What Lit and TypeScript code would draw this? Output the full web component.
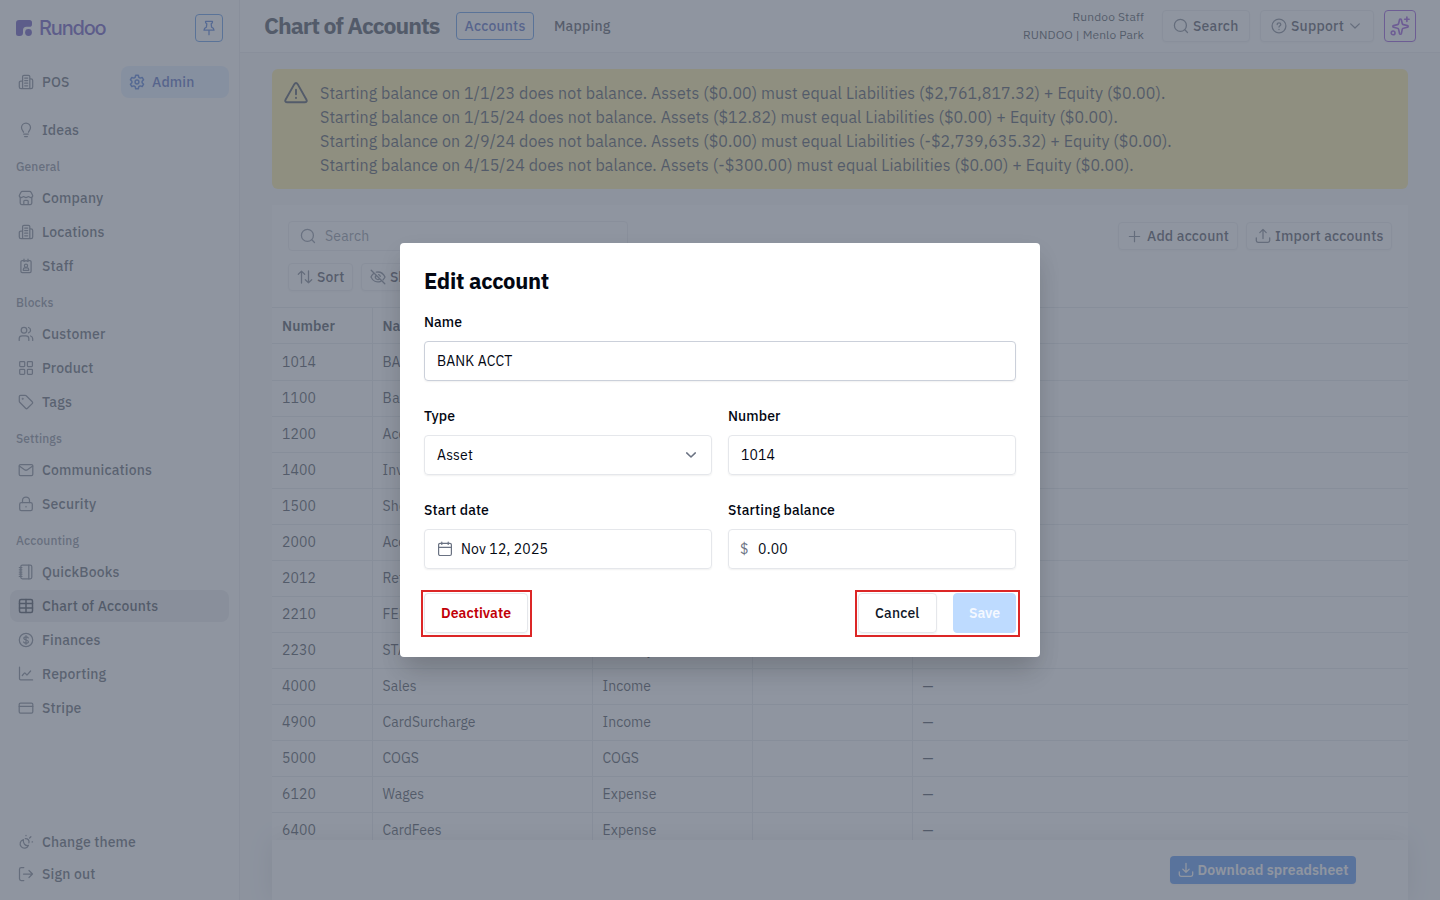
import { LitElement, html, css, svg, nothing } from "lit";
import { customElement, property } from "lit/decorators.js";

const ICONS: Record<string, any> = {
  building: svg`<path d="M4.600 14.500V2.600c0-.9.4-1.300 1.300-1.300h4.600c.9 0 1.300.4 1.300 1.300v11.900M4.600 7H2.900C1.800 7 1.300 7.600 1.300 8.600v4.300c0 1 .6 1.700 1.700 1.700h10c1 0 1.700-.6 1.700-1.700V6.500c0-1-.6-1.700-1.700-1.700h-1.200M6.700 4h3M6.700 6.600h3M6.700 9.200h3M6.700 11.800h3"/>`,
  gear: svg`<circle cx="8" cy="8" r="1.900"/><path d="M6.700 1.300h2.600l.5 2 1.400.8 2-.6 1.400 2.300-1.500 1.400v1.600l1.500 1.400-1.400 2.300-2-.6-1.400.8-.5 2H6.700l-.5-2-1.400-.8-2 .6-1.400-2.300 1.500-1.400V7.200L1.400 5.800l1.400-2.300 2 .6 1.400-.8z"/>`,
  bulb: svg`<path d="M5.500 10.200c0-1.200-2-2.100-2-4.700a4.500 4.500 0 0 1 9 0c0 2.600-2 3.500-2 4.700M5.700 12h4.600M6.600 14.500h2.800"/>`,
  store: svg`<path d="M2.200 7.500v5.600c0 .9.500 1.400 1.400 1.400h8.800c.9 0 1.400-.5 1.400-1.400V7.500M1.300 5.500l1.500-3c.4-.8.8-1.100 1.600-1.100h7.200c.8 0 1.200.3 1.600 1.100l1.500 3c0 1.200-.8 2-1.900 2s-1.600-.9-2.400-.9-1.200.9-2.400.9-1.600-.9-2.400-.9-1.300.9-2.400.9-1.900-.8-1.900-2zM5.800 14.500v-3.200c0-.6.4-1 1-1h2.400c.6 0 1 .4 1 1v3.200"/>`,
  badge: svg`<path d="M5 2.500H4.200c-.8 0-1.300.5-1.300 1.300v9.400c0 .8.500 1.300 1.300 1.300h7.600c.8 0 1.300-.5 1.300-1.300V3.800c0-.8-.5-1.300-1.300-1.300H11M6 1.200v2.300l2-.9 2 .9V1.200M5.300 12.300v-.7c0-1 .7-1.700 1.700-1.700h2c1 0 1.700.7 1.700 1.700v.7z"/><circle cx="8" cy="7.700" r="1.600"/>`,
  users: svg`<circle cx="6" cy="4.200" r="2.800"/><path d="M1.200 14.400v-1.800c0-1.700 1.200-2.800 2.900-2.800h3.800c1.700 0 2.900 1.100 2.900 2.800v1.800M10.500 1.500a2.800 2.800 0 0 1 0 5.400M12.600 10c1.300.4 2.100 1.400 2.100 2.700v1.700"/>`,
  grid: svg`<rect x="1.700" y="1.500" width="5" height="5" rx=".8"/><rect x="9.400" y="1.500" width="5" height="5" rx=".8"/><rect x="1.700" y="9.300" width="5" height="5" rx=".8"/><rect x="9.400" y="9.300" width="5" height="5" rx=".8"/>`,
  tag: svg`<path d="M1.300 2.500c0-.7.500-1.200 1.200-1.200h4.700c.4 0 .7.100 1 .4l6 6c.6.600.6 1.300 0 1.900l-4.700 4.700c-.6.600-1.300.6-1.900 0l-5.900-6c-.3-.3-.4-.6-.4-1z"/><circle cx="4.700" cy="4.700" r=".4"/>`,
  mail: svg`<rect x="1.200" y="2.500" width="13.600" height="11" rx="1.300"/><path d="M1.300 4l5.600 3.900c.8.500 1.400.5 2.200 0L14.700 4"/>`,
  lock: svg`<rect x="1.700" y="6.600" width="12.600" height="8" rx="1.600"/><path d="M4.500 6.600V4.500a3.500 3.500 0 0 1 7 0v2.100M8 10.400v.5"/>`,
  notebook: svg`<rect x="2.800" y="1.200" width="11" height="13.600" rx="1.500"/><path d="M10.800 1.200v13.600M1.300 3.600h2.600M1.300 5.800h2.600M1.300 8h2.600M1.300 10.200h2.600M1.300 12.400h2.600"/>`,
  table: svg`<rect x="1.500" y="1.500" width="13" height="13" rx="1.500"/><path d="M1.500 5.500h13M1.500 10h13M8 1.500v13"/>`,
  dollar: svg`<circle cx="8" cy="8" r="6.700"/><path d="M10.300 5.900c-.3-.7-1-1.100-2.300-1.100-1.400 0-2.200.6-2.200 1.500 0 2.300 4.600 1.100 4.600 3.400 0 .9-.8 1.500-2.400 1.500-1.300 0-2.100-.5-2.400-1.200M8 3.700v8.600"/>`,
  chart: svg`<path d="M1.500 1.200v11.600c0 .7.400 1.100 1.100 1.100H14.600M4.300 9.500l2-2.300c.3-.3.600-.3.900 0l1.300 1.500c.3.300.6.300.9 0l3.200-3.700"/>`,
  card: svg`<rect x="1.200" y="3" width="13.600" height="10" rx="1.300"/><path d="M1.200 6.400h13.600"/>`,
  theme: svg`<path d="M5.400 5.600a4.300 4.300 0 1 0 5 5.800c-3 .9-5.700-2.100-5-5.800zM8 1.300v.4M11.600 4l1.300-1.300M14.500 7.900h-.4M7.300 4.600a3.300 3.300 0 0 1 3.600 4.300"/>`,
  exit: svg`<path d="M5.800 1.500H3.200c-1.100 0-1.700.6-1.700 1.700v9.600c0 1.100.6 1.700 1.700 1.700h2.600M5.500 8h9M11 4.500L14.500 8 11 11.500"/>`,
  pin: svg`<path d="M4.500 1.300h7c.3 1.500-.4 2-1.300 2.600l.4 3.200c1.600.6 2.400 1.500 2.400 3.100H3c0-1.600.8-2.500 2.400-3.100l.4-3.200C4.900 3.300 4.200 2.800 4.500 1.300zM8 10.200v4.500"/>`,
  alert: svg`<path d="M6.900 2.100L1.100 12.300c-.6 1-.1 1.900 1.100 1.900h11.600c1.200 0 1.700-.9 1.100-1.900L9.100 2.100c-.6-1-1.600-1-2.200 0zM8 5.800v3M8 11.100v.2"/>`,
  search: svg`<circle cx="7.400" cy="7.400" r="6"/><path d="M11.800 11.800l2.700 2.700"/>`,
  help: svg`<circle cx="8" cy="8" r="6.900"/><path d="M6.200 6.500c0-1 .7-1.700 1.800-1.700s1.800.6 1.800 1.600c0 1.200-1.800 1.400-1.800 2.700M8 11.300v.2"/>`,
  chevron: svg`<path d="M3.700 5.900L8 10l4.300-4.100"/>`,
  sparkle: svg`<path d="M8.300 2.400c.4 0 .7.200.8.600l.7 3c.1.500.4.800.9.900l3.300.8c.7.200.7 1.100 0 1.300l-3.300.8c-.5.100-.8.400-.9.900l-.7 3.300c-.2.800-1.300.8-1.500 0l-.7-3.300c-.1-.5-.4-.8-.9-.9l-3.200-.8c-.7-.2-.7-1.100 0-1.300l3.200-.8c.5-.1.800-.4.900-.9l.7-3c.1-.4.300-.6.700-.6zM13.500.8v3.600M11.700 2.600h3.600"/><circle cx="2.500" cy="13.500" r="1.500"/>`,
  plus: svg`<path d="M8 2.500v11M2.500 8h11"/>`,
  upload: svg`<path d="M8 10.500V1.500M4.800 4.600L8 1.400l3.200 3.200M1.300 9.800v2.800c0 1.100.6 1.700 1.700 1.700h10c1.100 0 1.700-.6 1.700-1.700V9.800"/>`,
  download: svg`<path d="M8 1.300v8.900M4.800 7.100L8 10.300l3.200-3.200M1.300 9.800v2.800c0 1.100.6 1.700 1.700 1.700h10c1.100 0 1.700-.6 1.700-1.700V9.800"/>`,
  sort: svg`<path d="M4.500 14V2.200M1.300 5.200l3.200-3.100 3.200 3.100M11.500 2v11.800M8.300 10.700l3.200 3.100 3.200-3.100"/>`,
  eyeoff: svg`<path d="M1.200 1.200l13.600 13.600M6.300 3.200C10.500 2.300 13.500 5 15 8c-.5 1-1.100 1.900-1.900 2.700M10.800 12.300C6.500 13.900 2.700 11.800 1 8c.6-1.400 1.500-2.500 2.600-3.400M6.100 6.500a2.400 2.400 0 0 0 3.500 3.300M8.600 5.700c.9.200 1.500.8 1.700 1.600"/>`,
  calendar: svg`<rect x="1.600" y="2.300" width="12.800" height="12.200" rx="1.500"/><path d="M1.600 6.300h12.800M4.800 1v2.500M11.200 1v2.500"/>`,
};

const icon = (name: string, size = 16, stroke = 1.3) => html`<svg
  class="icon" width=${size} height=${size} viewBox="0 0 16 16" fill="none"
  stroke="currentColor" stroke-width=${stroke} stroke-linecap="round" stroke-linejoin="round">${ICONS[name]}</svg>`;

/** One line of text whose tracking is set so that it fills a given measure. */
@customElement("set-text")
class SetText extends LitElement {
  @property({ type: Number }) measure = 0;
  @property() text = "";
  static styles = css`
    :host { display: inline-block; white-space: pre; }
  `;
  render() { return html`<span>${this.text}</span>`; }
  updated() {
    this.fit();
    document.fonts.ready.then(() => this.fit());
  }
  fit() {
    const span = this.renderRoot.querySelector("span");
    if (!span || !this.measure) return;
    span.style.letterSpacing = "0px";
    const w = span.getBoundingClientRect().width;
    span.style.letterSpacing = `${((this.measure - w) / this.text.length).toFixed(3)}px`;
  }
}

const t = (text: string, measure: number) => html`<set-text .text=${text} .measure=${measure}></set-text>`;

type Item = [string, string, number];
const NAV: { label?: [string, number]; items: Item[] }[] = [
  { items: [["bulb", "Ideas", 37]] },
  { label: ["General", 44], items: [["store", "Company", 61.5], ["building", "Locations", 62.5], ["badge", "Staff", 31.5]] },
  { label: ["Blocks", 37.5], items: [["users", "Customer", 63.5], ["grid", "Product", 51.5], ["tag", "Tags", 30]] },
  { label: ["Settings", 46], items: [["mail", "Communications", 110], ["lock", "Security", 54.5]] },
  {
    label: ["Accounting", 63],
    items: [["notebook", "QuickBooks", 77.5], ["table", "Chart of Accounts", 116.3], ["dollar", "Finances", 58.5],
      ["chart", "Reporting", 64.3], ["card", "Stripe", 39.5]],
  },
];

const ALERTS: [string, number][] = [
  ["Starting balance on 1/1/23 does not balance. Assets ($0.00) must equal Liabilities ($2,761,817.32) + Equity ($0.00).", 845.3],
  ["Starting balance on 1/15/24 does not balance. Assets ($12.82) must equal Liabilities ($0.00) + Equity ($0.00).", 797.8],
  ["Starting balance on 2/9/24 does not balance. Assets ($0.00) must equal Liabilities (-$2,739,635.32) + Equity ($0.00).", 851.8],
  ["Starting balance on 4/15/24 does not balance. Assets (-$300.00) must equal Liabilities ($0.00) + Equity ($0.00).", 813.8],
];

const ROWS: [string, string, number, string, number][] = [
  ["1014", "BANK ACCT", 75, "Asset", 36],
  ["1100", "Bank", 34, "Asset", 36],
  ["1200", "Accounts Receivable", 130, "Asset", 36],
  ["1400", "Inventory", 62, "Asset", 36],
  ["1500", "Shop", 33, "Asset", 36],
  ["2000", "Accounts Payable", 109, "Liability", 51],
  ["2012", "Refunds", 52, "Liability", 51],
  ["2210", "FED TAX", 54, "Liability", 51],
  ["2230", "STATE TAX", 68, "Liability", 51],
  ["4000", "Sales", 34, "Income", 48.5],
  ["4900", "CardSurcharge", 93, "Income", 48.5],
  ["5000", "COGS", 36.5, "COGS", 36.5],
  ["6120", "Wages", 41.5, "Expense", 54],
  ["6400", "CardFees", 59, "Expense", 54],
];

@customElement("app-root")
class AppRoot extends LitElement {
  static styles = css`
    :host {
      display: block; position: relative; width: 1440px; height: 900px; overflow: hidden;
      font-family: "IBM Plex Sans", Roboto, "Noto Sans", sans-serif; font-size: 14px; line-height: 20px;
      color: #030712; background: #fff;
    }
    * { box-sizing: border-box; }
    .icon { display: block; flex: none; }
    .shell { display: flex; height: 900px; }
    .side { width: 240px; flex: none; border-right: 1px solid #e5e7eb; display: flex; flex-direction: column; padding: 14px 10px 10px; background: #fff; }
    .brand { display: flex; align-items: center; height: 28px; padding: 0 6px; }
    .mark { width: 16px; height: 16px; margin-right: 7px; }
    .wordmark { font: 500 20px/28px Inter, sans-serif; color: #3a20a8; flex: 1; }
    .pin { width: 28px; height: 28px; border: 1px solid #2f78e0; border-radius: 4px; display: grid; place-items: center; color: #1d55cc; padding-bottom: 1px; }
    .modes { display: grid; grid-template-columns: 108px 108px; gap: 3px; margin: 24px 0 16px; }
    .item { display: flex; align-items: center; gap: 8px; height: 32px; padding: 0 8px; border-radius: 8px; font-weight: 500; color: #2f3746; margin-bottom: 2px; }
    .item .icon { color: #5a6272; }
    .modes .item { margin: 0; }
    .item.mode { background: #dbeafe; color: #1c3cb0; gap: 7px; }
    .item.mode .icon { color: #1d55cc; }
    .item.on { background: #e5e7eb; color: #101828; }
    .item.on .icon { color: #101828; }
    .label { height: 36px; margin-top: -2px; padding: 6px 6px 0; line-height: 30px; font-size: 12px; font-weight: 500; color: #5f6778; }
    .grow { flex: 1; }
    .foot .item { margin: 0; }
    .main { flex: 1; min-width: 0; display: flex; flex-direction: column; background: #f5f6f8; }
    .top { height: 53px; flex: none; border-bottom: 1px solid #e5e7eb; background: #fff; display: flex; align-items: center; padding: 0 24px; }
    .title { font-size: 23px; line-height: 32px; font-weight: 700; color: #101828; width: 192px; padding-bottom: 2px; }
    .tab { height: 28px; width: 78px; border: 1px solid #2f78e0; border-radius: 4px; padding: 0 7.5px; line-height: 26px; font-weight: 500; color: #1c3cb0; margin-right: 20px; }
    .tab2 { font-weight: 500; color: #1e2533; }
    .who { font-size: 12px; line-height: 18px; text-align: right; margin-right: 18px; color: #101828; display: flex; flex-direction: column; align-items: flex-end; }
    .btn { display: flex; align-items: center; border: 1px solid #e5e7eb; border-radius: 4px; background: #fff; font-weight: 500; color: #1a2130; height: 28px; box-shadow: 0 1px 2px rgba(0,0,0,.05); gap: 4px; }
    .btn .icon { color: #5a6272; }
    .search { height: 32px; width: 88px; padding-left: 10px; margin-right: 10px; }
    .support { height: 32px; width: 114px; padding-left: 10px; margin-right: 10px; }
    .support .icon:last-child { margin-left: -1px; }
    .spark { height: 32px; width: 32px; padding-left: 5px; border-color: #7a22d0; }
    .spark .icon { color: #7a22d0; }
    .body { flex: 1; min-height: 0; padding: 16px 32px 0; display: flex; flex-direction: column; }
    .alert { display: flex; gap: 12px; padding: 12px; background: #fde580; border-radius: 6px; font-size: 16px; line-height: 24px; height: 120px; flex: none; color: #101828; }
    .alert .lines { display: flex; flex-direction: column; }
    .card { flex: 1; min-height: 0; margin-top: 16px; background: #fff; display: flex; flex-direction: column; overflow: hidden; }
    .tools { padding: 16px 16px 0; display: flex; justify-content: space-between; height: 58px; flex: none; }
    .find { width: 340px; height: 30px; border: 1px solid #e5e7eb; border-radius: 4px; display: flex; align-items: center; gap: 9px; padding-left: 11px; color: #6a7282; }
    .right { display: flex; gap: 8px; padding-top: 1px; }
    .add { width: 120px; padding-left: 8px; gap: 5px; }
    .import { width: 146px; padding-left: 8px; }
    .filters { display: flex; gap: 8px; padding: 0 16px; height: 44px; flex: none; }
    .sort { width: 65px; padding-left: 8px; }
    .show { width: 120px; padding-left: 8px; }
    .rows { flex: 1; min-height: 0; overflow: hidden; border-top: 1px solid #dfe2e8; }
    .row { display: grid; grid-template-columns: 101px 220px 160px 160px 1fr; height: 36px; border-bottom: 1px solid #dfe2e8; line-height: 34px; color: #101828; }
    .row > div { border-right: 1px solid #dfe2e8; padding-left: 9.5px; overflow: hidden; white-space: nowrap; }
    .row > div:first-child { padding-left: 10px; }
    .row > div:last-child { border-right: 0; }
    .row.head { font-weight: 600; line-height: 36px; }
    .row.first { height: 37px; line-height: 36px; }
    .bar { flex: none; height: 60px; background: #fff; box-shadow: 0 0 24px rgba(0,0,0,.14); padding: 16px 52px 0; display: flex; justify-content: flex-end; position: relative; }
    .dl { background: #2b78f0; color: #fff; border: 0; width: 186px; padding-left: 8px; gap: 3.5px; font-weight: 600; }
    .dl .icon { color: #fff; }
    .scrim { position: absolute; inset: 0; background: rgba(106,113,128,.75); display: grid; place-items: center; }
    .modal { width: 640px; height: 414px; background: #fff; border-radius: 4px; padding: 24px; box-shadow: 0 20px 25px -5px rgba(0,0,0,.1), 0 10px 24px -2px rgba(0,0,0,.1); }
    .mtitle { font-size: 22px; line-height: 28px; font-weight: 700; height: 41px; }
    .fields { display: grid; grid-template-columns: 288px 288px; gap: 20px 16px; }
    .wide { grid-column: 1 / 3; }
    .field { height: 74px; font-weight: 500; padding-top: 4px; line-height: 20px; }
    .input { margin-top: 9px; height: 40px; border: 1px solid #e5e7eb; border-radius: 4px; box-shadow: 0 1px 2px rgba(0,0,0,.06); display: flex; align-items: center; padding: 0 12px; font-weight: 400; }
    .input .icon { color: #6a7282; }
    .input.focus { border-color: #cbd0da; }
    .cal { gap: 8px; }
    .money { padding-left: 11px; gap: 10px; }
    .sign { color: #6a7282; }
    .actions { display: flex; justify-content: space-between; margin-top: 20px; }
    .ring { border: 2px solid #dc2626; padding: 1px; margin: 0 -4px 0 -3px; height: 47px; display: flex; }
    .act { height: 40px; border: 1px solid #e5e7eb; border-radius: 4px; box-shadow: 0 1px 2px rgba(0,0,0,.06); line-height: 38px; font-weight: 600; text-align: left; padding-left: 16px; }
    .danger { color: #c10007; width: 104px; margin-right: 1px; }
    .cancel { width: 79px; color: #101828; margin-right: 16px; font-weight: 500; }
    .save { width: 63px; background: #bedbff; border-color: #bedbff; color: #f4f8ff; padding-left: 15px; box-shadow: none; margin-right: 1px; }
    .pair { padding-left: 1px; }
  `;

  navItem([ic, text, w]: Item) {
    const on = ic === "table";
    return html`<div class="item ${on ? "on" : ""}">${icon(ic, 16, on ? 1.5 : 1.25)}${t(text, w)}</div>`;
  }

  render() {
    return html`
      <div class="shell">
        <nav class="side">
          <div class="brand">
            <svg class="mark" viewBox="0 0 16 16" fill="#3a20a8"><path d="M3 0h10.500A2.500 2.500 0 0 1 16 2.500v1.700a2.600 2.600 0 0 1-2.600 2.600H10.500A3.500 3.500 0 0 0 7 10.300v2.400A3.300 3.300 0 0 1 3.700 16H2.500A2.500 2.500 0 0 1 0 13.500V3a3 3 0 0 1 3-3z"/><circle cx="12.500" cy="12.500" r="3.400"/></svg>
            <div class="wordmark">${t("Rundoo", 66.5)}</div>
            <div class="pin">${icon("pin", 16, 1.3)}</div>
          </div>
          <div class="modes">
            <div class="item">${icon("building", 16, 1.25)}${t("POS", 27.5)}</div>
            <div class="item mode">${icon("gear", 16, 1.5)}${t("Admin", 42.5)}</div>
          </div>
          ${NAV.map((g) => html`
            ${g.label ? html`<div class="label">${t(g.label[0], g.label[1])}</div>` : nothing}
            ${g.items.map((i) => this.navItem(i))}`)}
          <div class="grow"></div>
          <div class="foot">
            ${this.navItem(["theme", "Change theme", 94])}
            ${this.navItem(["exit", "Sign out", 53.5])}
          </div>
        </nav>
        <main class="main">
          <header class="top">
            <div class="title">${t("Chart of Accounts", 175.5)}</div>
            <div class="tab">${t("Accounts", 61)}</div>
            <div class="tab2">${t("Mapping", 56.5)}</div>
            <div class="grow"></div>
            <div class="who">${t("Rundoo Staff", 71.5)}${t("RUNDOO | Menlo Park", 121)}</div>
            <div class="btn search">${icon("search", 16)}${t("Search", 45.5)}</div>
            <div class="btn support">${icon("help", 16)}${t("Support", 53)}${icon("chevron", 16, 1.3)}</div>
            <div class="btn spark">${icon("sparkle", 20, 1.3)}</div>
          </header>
          <div class="body">
            <div class="alert">${icon("alert", 24, 1.25)}<div class="lines">${ALERTS.map(([s, w]) => t(s, w))}</div></div>
            <section class="card">
              <div class="tools">
                <div class="find">${icon("search", 16)}${t("Search", 44.5)}</div>
                <div class="right">
                  <div class="btn add">${icon("plus", 15)}${t("Add account", 82)}</div>
                  <div class="btn import">${icon("upload", 16)}${t("Import accounts", 108.5)}</div>
                </div>
              </div>
              <div class="filters">
                <div class="btn sort">${icon("sort", 16)}${t("Sort", 27.5)}</div>
                <div class="btn show">${icon("eyeoff", 16)}${t("Show inactive", 86)}</div>
              </div>
              <div class="rows">
                <div class="row head">
                  <div>${t("Number", 53)}</div><div>${t("Name", 38)}</div><div>${t("Type", 31)}</div><div>${t("Start date", 65)}</div><div>${t("Starting balance", 107)}</div>
                </div>
                ${ROWS.map(([n, name, w, type, tw], i) => html`
                  <div class="row ${i === 0 ? "first" : ""}">
                    <div>${t(n, 34)}</div><div>${t(name, w)}</div><div>${t(type, tw)}</div><div></div><div>${t("—", 11)}</div>
                  </div>`)}
              </div>
            </section>
            <footer class="bar"><div class="btn dl">${icon("download", 16, 1.3)}${t("Download spreadsheet", 151)}</div></footer>
          </div>
        </main>
      </div>
      <div class="scrim">
        <div class="modal">
          <div class="mtitle">${t("Edit account", 125)}</div>
          <div class="fields">
            <div class="field wide">${t("Name", 38)}<div class="input focus">${t("BANK ACCT", 75.5)}</div></div>
            <div class="field">${t("Type", 31)}<div class="input">${t("Asset", 36)}<div class="grow"></div>${icon("chevron", 16, 1.5)}</div></div>
            <div class="field">${t("Number", 52.5)}<div class="input">${t("1014", 34)}</div></div>
            <div class="field">${t("Start date", 65)}<div class="input cal">${icon("calendar", 16, 1.2)}${t("Nov 12, 2025", 87)}</div></div>
            <div class="field">${t("Starting balance", 107)}<div class="input money"><span class="sign">${t("$", 8)}</span>${t("0.00", 30)}</div></div>
          </div>
          <div class="actions">
            <div class="ring"><div class="act danger">${t("Deactivate", 70)}</div></div>
            <div class="ring pair"><div class="act cancel">${t("Cancel", 44.5)}</div><div class="act save">${t("Save", 31)}</div></div>
          </div>
        </div>
      </div>`;
  }
}
